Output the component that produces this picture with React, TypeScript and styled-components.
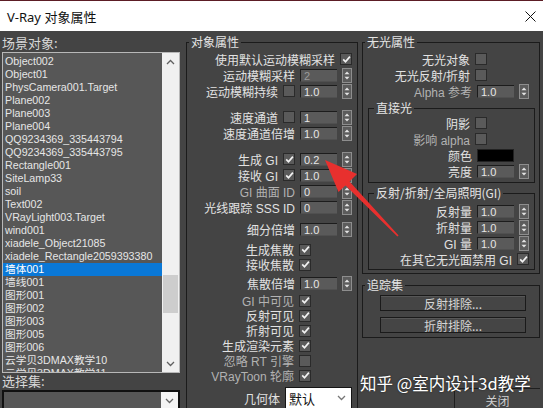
import styled, { createGlobalStyle } from "styled-components";

const GlobalStyle = createGlobalStyle`
  html, body {
    margin: 0;
    padding: 0;
    background: #444444;
  }
`;

const sceneObjects = [
  "Object002",
  "Object01",
  "PhysCamera001.Target",
  "Plane002",
  "Plane003",
  "Plane004",
  "QQ9234369_335443794",
  "QQ9234369_335443795",
  "Rectangle001",
  "SiteLamp33",
  "soil",
  "Text002",
  "VRayLight003.Target",
  "wind001",
  "xiadele_Object21085",
  "xiadele_Rectangle2059393380",
  "墙体001",
  "墙线001",
  "图形001",
  "图形002",
  "图形003",
  "图形005",
  "图形006",
  "云学贝3DMAX教学10",
  "云学贝3DMAX教学11",
];

const Window = styled.div`
  position: relative;
  width: 543px;
  height: 408px;
  overflow: hidden;
  background: #444444;
  color: #dedede;
  font-family: "Liberation Sans", "Noto Sans CJK SC", sans-serif;
  font-size: 12px;
`;

const TitleBar = styled.div`
  height: 30px;
  border-top: 1px solid #5c1d25;
  background: #ffffff;
  display: flex;
  align-items: center;
  justify-content: space-between;
  padding: 0 7px 0 7px;
  color: #111;
  font-family: "Noto Sans", "Noto Sans CJK SC", sans-serif;
  font-size: 13px;
`;

const Body = styled.div`
  display: flex;
  align-items: stretch;
  height: 400px;
  padding: 4px 3px 0 2px;
  box-sizing: border-box;
`;

const LeftColumn = styled.div`
  width: 178px;
  margin-right: 6px;
  display: flex;
  flex-direction: column;
`;

const SideLabel = styled.div`
  height: 16px;
  line-height: 16px;
  font-family: "Noto Sans CJK SC", sans-serif;
  font-size: 13px;
  color: #d8d8d8;
`;

const ListBox = styled.div`
  margin-top: 1px;
  height: 321px;
  box-sizing: border-box;
  border: 1px solid #b8b8b8;
  background: #575757;
  display: grid;
  grid-template-columns: 1fr 17px;
  overflow: hidden;
`;

const Items = styled.div`
  padding-top: 2px;
  overflow: hidden;
`;

const Item = styled.div<{ $selected?: boolean }>`
  height: 13px;
  line-height: 13px;
  padding-left: 2px;
  font-size: 10.7px;
  white-space: nowrap;
  color: ${(p) => (p.$selected ? "#ffffff" : "#e6e6e6")};
  background: ${(p) => (p.$selected ? "#0a78d7" : "transparent")};
`;

const ScrollBar = styled.div`
  background: #f0f0f0;
  display: flex;
  flex-direction: column;
`;

const ScrollButton = styled.div`
  height: 17px;
  display: flex;
  align-items: center;
  justify-content: center;
`;

const Track = styled.div`
  flex: 1;
`;

const Thumb = styled.div<{ $top: number; $h: number }>`
  margin: ${(p) => p.$top}px 1px 0 1px;
  height: ${(p) => p.$h}px;
  background: #cdcdcd;
`;

const SetSelect = styled.div`
  margin-top: 1px;
  height: 22px;
  box-sizing: border-box;
  border: 2px solid #111;
  background: #575757;
  display: flex;
  justify-content: flex-end;
`;

const SetArrow = styled.div`
  width: 17px;
  background: #f4f4f4;
  display: flex;
  align-items: center;
  justify-content: center;
`;

const Group = styled.fieldset<{ $pad?: string; $mt?: number }>`
  margin: ${(p) => p.$mt ?? 0}px 0 0 0;
  padding: ${(p) => p.$pad ?? "2px 5px 0 5px"};
  border: 1px solid #1b1b1b;
  min-width: 0;
`;

const Legend = styled.legend`
  padding: 0 2px;
  margin-left: -3px;
  font-family: "Noto Sans CJK SC", sans-serif;
  font-size: 12px;
  line-height: 14px;
  color: #e4e4e4;
`;

const MiddleGroup = styled(Group)`
  width: 172px;
  box-sizing: border-box;
  margin-right: 4px;
  flex-shrink: 0;
`;

const RightColumn = styled.div`
  width: 178px;
  display: flex;
  flex-direction: column;
`;

const RowBlock = styled.div<{ $pr: number }>`
  padding-right: ${(p) => p.$pr}px;
`;

const Row = styled.div<{ $h?: number }>`
  display: flex;
  align-items: center;
  justify-content: flex-end;
  gap: 5px;
  height: ${(p) => p.$h ?? 16}px;
  white-space: nowrap;
`;

const Spacer = styled.div<{ $h: number }>`
  height: ${(p) => p.$h}px;
`;

const Label = styled.span<{ $dim?: boolean }>`
  font-family: "Liberation Sans", "Noto Sans CJK SC", sans-serif;
  font-size: 12px;
  color: ${(p) => (p.$dim ? "#b2b2b2" : "#e2e2e2")};
`;

const CheckBox = styled.span<{ $mr?: number }>`
  width: 10px;
  height: 10px;
  margin-right: ${(p) => p.$mr ?? 0}px;
  border: 1px solid #2a2a2a;
  background: #5a5a5a;
  display: flex;
  align-items: center;
  justify-content: center;
  flex-shrink: 0;
`;

const Field = styled.div<{ $dim?: boolean }>`
  width: 37px;
  height: 13px;
  box-sizing: border-box;
  border-top: 1px solid #1c1c1c;
  border-left: 1px solid #1c1c1c;
  border-bottom: 1px solid #505050;
  background: #5a5a5a;
  padding-left: 3px;
  font-size: 11px;
  line-height: 12px;
  color: ${(p) => (p.$dim ? "#9a9a9a" : "#e6e6e6")};
`;

const Arrows = styled.div`
  width: 10px;
  height: 15px;
  box-sizing: border-box;
  border: 1px solid #8e8e8e;
  background: #5c5c5c;
  display: flex;
  align-items: center;
  justify-content: center;
`;

const Swatch = styled.div`
  width: 37px;
  height: 13px;
  margin-right: 15px;
  background: #000;
  border: 1px solid #222;
  box-sizing: border-box;
`;

const Combo = styled.div`
  width: 67px;
  height: 22px;
  box-sizing: border-box;
  border: 1px solid #151515;
  background: #ffffff;
  color: #111;
  display: flex;
  align-items: center;
  justify-content: space-between;
  padding: 0 5px 0 3px;
  font-family: "Noto Sans CJK SC", sans-serif;
  font-size: 13px;
`;

const PushButton = styled.div<{ $w: number }>`
  width: ${(p) => p.$w}px;
  height: 16px;
  box-sizing: border-box;
  border: 1px solid #1a1a1a;
  box-shadow: inset 0 1px 0 #575757;
  background: #454545;
  display: flex;
  align-items: center;
  justify-content: center;
  font-family: "Noto Sans CJK SC", sans-serif;
  font-size: 12px;
  color: #d6d6d6;
`;

const ButtonStack = styled.div`
  display: flex;
  flex-direction: column;
  gap: 6px;
  padding-left: 12px;
`;

const CloseButton = styled.div`
  align-self: flex-end;
  margin-top: 50px;
  width: 86px;
  height: 26px;
  box-sizing: border-box;
  border-top: 1px solid #1f1f1f;
  border-left: 1px solid #1f1f1f;
  background: #454545;
  padding-top: 3px;
  text-align: center;
  font-family: "Noto Sans CJK SC", sans-serif;
  font-size: 12px;
  color: #cfcfcf;
`;

const Overlay = styled.svg`
  position: absolute;
  left: 0;
  top: 0;
  pointer-events: none;
`;

const Watermark = styled.div`
  position: absolute;
  left: 360px;
  top: 372px;
  font-family: "Noto Sans CJK SC", sans-serif;
  font-size: 16.5px;
  line-height: 22px;
  color: #ffffff;
  text-shadow: 0 0 2px rgba(0, 0, 0, 0.6);
  white-space: nowrap;
`;

const Check = ({ on, mr }: { on: boolean; mr?: number }) => (
  <CheckBox $mr={mr}>
    {on && (
      <svg width="9" height="9" viewBox="0 0 9 9">
        <path d="M1.2 4.4 L3.5 6.8 L7.9 1.6" fill="none" stroke="#f2f2f2" strokeWidth="1.7" />
      </svg>
    )}
  </CheckBox>
);

const Spinner = ({ value, dim }: { value: string; dim?: boolean }) => (
  <>
    <Field $dim={dim}>{value}</Field>
    <Arrows>
      <svg width="8" height="13" viewBox="0 0 8 13">
        <polygon points="1.5,5.2 4,2.4 6.5,5.2" fill="#e4e4e4" />
        <polygon points="1.5,7.8 4,10.6 6.5,7.8" fill="#e4e4e4" />
      </svg>
    </Arrows>
  </>
);

const Chevron = ({ up, color }: { up?: boolean; color: string }) => (
  <svg width="9" height="6" viewBox="0 0 9 6">
    <polyline
      points={up ? "1,5 4.5,1.5 8,5" : "1,1 4.5,4.5 8,1"}
      fill="none"
      stroke={color}
      strokeWidth="1.3"
    />
  </svg>
);

export default function App() {
  return (
    <Window>
      <GlobalStyle />
      <TitleBar>
        <span>V-Ray 对象属性</span>
        <svg width="11" height="11" viewBox="0 0 11 11">
          <path d="M0.5 0.5 L10.5 10.5 M10.5 0.5 L0.5 10.5" stroke="#111" strokeWidth="1" />
        </svg>
      </TitleBar>

      <Body>
        <LeftColumn>
          <SideLabel>场景对象:</SideLabel>
          <ListBox>
            <Items>
              {sceneObjects.map((name) => (
                <Item key={name} $selected={name === "墙体001"}>
                  {name}
                </Item>
              ))}
            </Items>
            <ScrollBar>
              <ScrollButton>
                <Chevron up color="#606060" />
              </ScrollButton>
              <Track>
                <Thumb $top={205} $h={38} />
              </Track>
              <ScrollButton>
                <Chevron color="#606060" />
              </ScrollButton>
            </ScrollBar>
          </ListBox>
          <SideLabel>选择集:</SideLabel>
          <SetSelect>
            <SetArrow>
              <Chevron color="#666" />
            </SetArrow>
          </SetSelect>
        </LeftColumn>

        <MiddleGroup>
          <Legend>对象属性</Legend>
          <Row>
            <Label>使用默认运动模糊采样</Label>
            <Check on />
          </Row>
          <Row>
            <Label>运动模糊采样</Label>
            <Spinner value="2" dim />
          </Row>
          <Row>
            <Label>运动模糊持续</Label>
            <Check on={false} />
            <Spinner value="1.0" />
          </Row>
          <Spacer $h={10} />
          <Row>
            <Label>速度通道</Label>
            <Check on={false} />
            <Spinner value="1" />
          </Row>
          <Row>
            <Label>速度通道倍增</Label>
            <Spinner value="1.0" />
          </Row>
          <Spacer $h={10} />
          <Row>
            <Label>生成 GI</Label>
            <Check on />
            <Spinner value="0.2" />
          </Row>
          <Row>
            <Label>接收 GI</Label>
            <Check on />
            <Spinner value="1.0" />
          </Row>
          <Row>
            <Label $dim>GI 曲面 ID</Label>
            <Spinner value="0" />
          </Row>
          <Row>
            <Label>光线跟踪 SSS ID</Label>
            <Spinner value="0" />
          </Row>
          <Spacer $h={6} />
          <Row>
            <Label>细分倍增</Label>
            <Spinner value="1.0" />
          </Row>
          <Spacer $h={5} />
          <Row $h={15}>
            <Label>生成焦散</Label>
            <Check on mr={41} />
          </Row>
          <Row $h={15}>
            <Label>接收焦散</Label>
            <Check on mr={41} />
          </Row>
          <Spacer $h={3} />
          <Row>
            <Label>焦散倍增</Label>
            <Spinner value="1.0" />
          </Row>
          <Spacer $h={2} />
          <Row $h={15}>
            <Label $dim>GI 中可见</Label>
            <Check on mr={41} />
          </Row>
          <Row $h={15}>
            <Label>反射可见</Label>
            <Check on mr={41} />
          </Row>
          <Row $h={15}>
            <Label>折射可见</Label>
            <Check on mr={41} />
          </Row>
          <Row $h={15}>
            <Label>生成渲染元素</Label>
            <Check on mr={41} />
          </Row>
          <Row $h={15}>
            <Label $dim>忽略 RT 引擎</Label>
            <Check on={false} mr={41} />
          </Row>
          <Row $h={15}>
            <Label $dim>VRayToon 轮廓</Label>
            <Check on mr={41} />
          </Row>
          <Spacer $h={4} />
          <Row $h={22}>
            <Label>几何体</Label>
            <Combo>
              <span>默认</span>
              <Chevron color="#777" />
            </Combo>
          </Row>
        </MiddleGroup>

        <RightColumn>
          <Group $pad="2px 4px 3px 5px">
            <Legend>无光属性</Legend>
            <RowBlock $pr={6}>
              <Row>
                <Label>无光对象</Label>
                <Check on={false} mr={42} />
              </Row>
              <Row>
                <Label>无光反射/折射</Label>
                <Check on={false} mr={42} />
              </Row>
              <Row>
                <Label $dim>Alpha 参考</Label>
                <Spinner value="1.0" />
              </Row>
            </RowBlock>
            <Group $pad="0 5px 3px 8px" $mt={2}>
              <Legend>直接光</Legend>
              <Row>
                <Label>阴影</Label>
                <Check on={false} mr={42} />
              </Row>
              <Row>
                <Label $dim>影响 alpha</Label>
                <Check on={false} mr={42} />
              </Row>
              <Row>
                <Label>颜色</Label>
                <Swatch />
              </Row>
              <Row>
                <Label>亮度</Label>
                <Spinner value="1.0" />
              </Row>
            </Group>
            <Group $pad="3px 5px 2px 8px" $mt={3}>
              <Legend>反射/折射/全局照明(GI)</Legend>
              <Row>
                <Label>反射量</Label>
                <Spinner value="1.0" />
              </Row>
              <Row>
                <Label>折射量</Label>
                <Spinner value="1.0" />
              </Row>
              <Row>
                <Label>GI 量</Label>
                <Spinner value="1.0" />
              </Row>
              <Row>
                <Label>在其它无光面禁用 GI</Label>
                <Check on />
              </Row>
            </Group>
          </Group>

          <Group $pad="3px 5px 4px 5px" $mt={4}>
            <Legend>追踪集</Legend>
            <ButtonStack>
              <PushButton $w={146}>反射排除...</PushButton>
              <PushButton $w={146}>折射排除...</PushButton>
            </ButtonStack>
          </Group>

          <CloseButton>关闭</CloseButton>
        </RightColumn>
      </Body>

      <Overlay width="543" height="408" viewBox="0 0 543 408">
        <polygon
          points="325,160 357,174 349.5,181.5 398.6,235.4 397.4,236.6 345.5,185.5 338.5,192"
          fill="#e8302e"
        />
      </Overlay>

      <Watermark>知乎 @室内设计3d教学</Watermark>
    </Window>
  );
}
